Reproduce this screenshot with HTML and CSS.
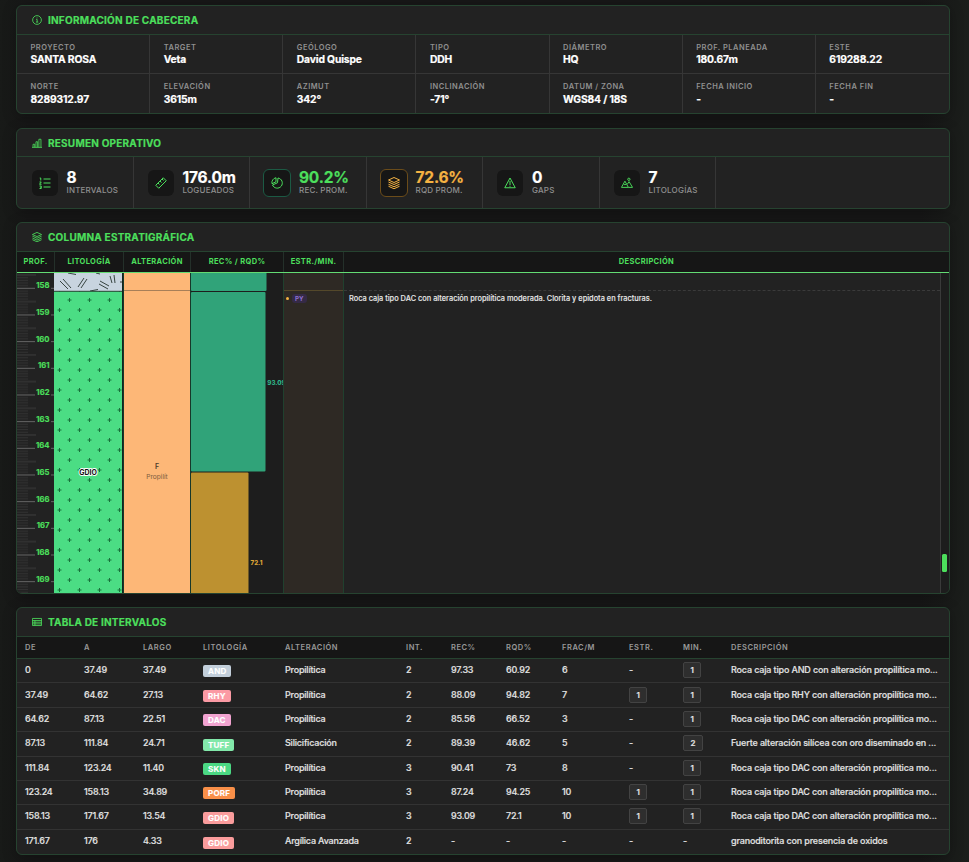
FILE: index.html
```
<!DOCTYPE html>
<html lang="es">
<head>
    <meta charset="UTF-8">
    <meta name="viewport" content="width=device-width, initial-scale=1.0">
    <title>Logueo geológico</title>
    <link rel="stylesheet" href="styles.css">
</head>
<body>
    <!-- Cabecera -->
    <section class="card card-info">
        <h2 class="card-title">
            <svg class="icon" viewBox="0 0 24 24"><circle cx="12" cy="12" r="10.5"/><path d="M10 10.5h2.3V17M9.5 17h5.5M12 6v2"/></svg>
            Información de cabecera
        </h2>
        <div class="info-grid">
            <div class="info"><span>Proyecto</span><b>SANTA ROSA</b></div>
            <div class="info"><span>Target</span><b>Veta</b></div>
            <div class="info"><span>Geólogo</span><b>David Quispe</b></div>
            <div class="info"><span>Tipo</span><b>DDH</b></div>
            <div class="info"><span>Diámetro</span><b>HQ</b></div>
            <div class="info"><span>Prof. planeada</span><b>180.67m</b></div>
            <div class="info"><span>Este</span><b>619288.22</b></div>
            <div class="info"><span>Norte</span><b>8289312.97</b></div>
            <div class="info"><span>Elevación</span><b>3615m</b></div>
            <div class="info"><span>Azimut</span><b>342°</b></div>
            <div class="info"><span>Inclinación</span><b>-71°</b></div>
            <div class="info"><span>Datum / Zona</span><b>WGS84 / 18S</b></div>
            <div class="info"><span>Fecha inicio</span><b>-</b></div>
            <div class="info"><span>Fecha fin</span><b>-</b></div>
        </div>
    </section>

    <!-- Resumen -->
    <section class="card card-stats">
        <h2 class="card-title">
            <svg class="icon" viewBox="0 0 24 24"><path d="M0 22.5h24M2.5 22v-7h4v7M9.5 22V9h4v13M16.5 22V3h5v19"/></svg>
            Resumen operativo
        </h2>
        <div class="stats">
            <div class="stat">
                <div class="stat-icon"><svg viewBox="0 0 24 24"><path d="M9 4h14M9 12h14M9 20h14M1.5 2h2v5M1 10h3.5L1 14.5h4M1 18h3.5v5H1M2.5 20.5h2"/></svg></div>
                <div class="stat-text"><b>8</b><span>Intervalos</span></div>
            </div>
            <div class="stat">
                <div class="stat-icon"><svg viewBox="0 0 24 24"><path d="M1.500 16.500 16.500 1.500l6 6-15 15zM6 12l3 3M10 8l3 3M14 4l3 3"/></svg></div>
                <div class="stat-text"><b>176.0m</b><span>Logueados</span></div>
            </div>
            <div class="stat">
                <div class="stat-icon rec"><svg viewBox="0 0 24 24"><path d="M14 2a10.2 10.2 0 1 1-11 14l10-4.500zM10 1.500v8L2 13.500A10 10 0 0 1 10 1.500z"/></svg></div>
                <div class="stat-text green"><b>90.2%</b><span>Rec. prom.</span></div>
            </div>
            <div class="stat">
                <div class="stat-icon rqd"><svg viewBox="0 0 24 24"><path d="m12 1 11 5-11 5L1 6zM1 10l11 5 11-5M1 14.500l11 5 11-5M1 18.500l11 5 11-5"/></svg></div>
                <div class="stat-text amber"><b>72.6%</b><span>RQD prom.</span></div>
            </div>
            <div class="stat">
                <div class="stat-icon"><svg viewBox="0 0 24 24"><path d="M12 2 1.500 21.500h21zM12 8v8M12 17.500v2"/></svg></div>
                <div class="stat-text"><b>0</b><span>Gaps</span></div>
            </div>
            <div class="stat">
                <div class="stat-icon"><svg viewBox="0 0 26 24"><path d="M1 21.500 8.500 8l7.500 13.500zM5.500 14l3 2 3-2M13.500 15l4-6L25 21.500h-9"/><circle cx="17" cy="4" r="2.500"/></svg></div>
                <div class="stat-text"><b>7</b><span>Litologías</span></div>
            </div>
        </div>
    </section>

    <!-- Columna estratigráfica -->
    <section class="card card-log">
        <h2 class="card-title">
            <svg class="icon" viewBox="0 0 24 24"><path d="m12 1 11 5-11 5L1 6zM1 10l11 5 11-5M1 14.500l11 5 11-5M1 18.500l11 5 11-5"/></svg>
            Columna estratigráfica
        </h2>
        <div class="log-head">
            <div>Prof.</div>
            <div>Litología</div>
            <div>Alteración</div>
            <div>Rec% / RQD%</div>
            <div>Estr./Min.</div>
            <div>Descripción</div>
        </div>
        <div class="log-body">
            <div class="col-prof">
                <svg width="37" height="320">
                    <defs>
                        <pattern id="ticks" y="14.8" width="37" height="26.67" patternUnits="userSpaceOnUse">
                            <path class="tick-minor" d="M0 3.2h11M0 5.8h11M0 8.5h11M0 11.2h11M0 16.5h11M0 19.2h11M0 21.8h11M0 24.5h11"/>
                            <path class="tick-mid" d="M0 13.8h19"/>
                            <path class="tick-major" d="M0 .5h18M34 .5h3"/>
                        </pattern>
                    </defs>
                    <rect width="37" height="320" fill="url(#ticks)"/>
                    <g class="depth">
                        <text x="32.5" y="15.3">158</text>
                        <text x="32.5" y="42">159</text>
                        <text x="32.5" y="68.6">160</text>
                        <text x="32.5" y="95.3">161</text>
                        <text x="32.5" y="122">162</text>
                        <text x="32.5" y="148.6">163</text>
                        <text x="32.5" y="175.3">164</text>
                        <text x="32.5" y="202">165</text>
                        <text x="32.5" y="228.6">166</text>
                        <text x="32.5" y="255.3">167</text>
                        <text x="32.5" y="282">168</text>
                        <text x="32.5" y="308.6">169</text>
                    </g>
                </svg>
            </div>
            <div class="col-lito">
                <svg width="68" height="320">
                    <defs>
                        <pattern id="gdio" x="0" y="22" width="20" height="20" patternUnits="userSpaceOnUse">
                            <path class="plus" d="M15.500 3v4M13.500 5h4M5.500 13v4M3.500 15h4"/>
                        </pattern>
                    </defs>
                    <rect class="porf" width="68" height="18"/>
                    <path class="dashes" d="m6 8 8 8M9 6l8 9M24 14l6-9M27 15l6-9M46 8l9 5M45 11l9 5M56 3l2 7M60 2l1 8M14 0l8 1.500M42 0l4 1M36 18l8-1.500M67 8v2"/>
                    <rect class="gdio" y="18" width="68" height="302"/>
                    <rect y="18.5" width="68" height="302" fill="url(#gdio)"/>
                    <path class="contact" d="M0 18.3h68"/>
                    <text class="lito-label" x="34" y="202">GDIO</text>
                </svg>
            </div>
            <div class="col-alt">
                <svg width="66" height="320">
                    <rect class="prop" width="66" height="320"/>
                    <path class="contact-soft" d="M0 17.500h66"/>
                    <text class="alt-code" x="33" y="196">F</text>
                    <text class="alt-name" x="33" y="206">Propilít</text>
                </svg>
            </div>
            <div class="col-rec">
                <svg width="92" height="320">
                    <rect class="bar-rec" x="0" y="-5" width="75.500" height="23" rx="1"/>
                    <rect class="bar-rec" x="0" y="19" width="74.500" height="179.500" rx="1"/>
                    <rect class="bar-rqd" x="0" y="199.500" width="57.500" height="125" rx="1"/>
                    <text class="rec-value" x="76.300" y="112">93.09</text>
                    <text class="rqd-value" x="59.500" y="292">72.1</text>
                </svg>
            </div>
            <div class="col-estr">
                <div class="mineral"><i></i><span>PY</span></div>
            </div>
            <div class="col-desc">
                <p>Roca caja tipo DAC con alteración propilítica moderada. Clorita y epidota en fracturas.</p>
            </div>
            <div class="scrollbar"><div class="thumb"></div></div>
        </div>
    </section>

    <!-- Tabla -->
    <section class="card card-table">
        <h2 class="card-title">
            <svg class="icon" viewBox="0 0 24 24"><path d="M1 3.500h22v17H1zM1 8.500h22M1 12.500h22M1 16.500h22M7 8.500v12"/></svg>
            Tabla de intervalos
        </h2>
        <table>
            <colgroup>
                <col class="w-de"><col class="w-a"><col class="w-largo"><col class="w-lito"><col class="w-alt"><col class="w-int"><col class="w-rec"><col class="w-rqd"><col class="w-frac"><col class="w-estr"><col class="w-min"><col>
            </colgroup>
            <thead>
                <tr><th>De</th><th>A</th><th>Largo</th><th>Litología</th><th>Alteración</th><th>Int.</th><th>Rec%</th><th>RQD%</th><th>Frac/m</th><th>Estr.</th><th>Min.</th><th>Descripción</th></tr>
            </thead>
            <tbody>
                <tr><td>0</td><td>37.49</td><td>37.49</td><td><span class="lito and">AND</span></td><td>Propilítica</td><td>2</td><td>97.33</td><td>60.92</td><td>6</td><td>-</td><td><span class="count">1</span></td><td>Roca caja tipo AND con alteración propilítica mo...</td></tr>
                <tr><td>37.49</td><td>64.62</td><td>27.13</td><td><span class="lito rhy">RHY</span></td><td>Propilítica</td><td>2</td><td>88.09</td><td>94.82</td><td>7</td><td><span class="count">1</span></td><td><span class="count">1</span></td><td>Roca caja tipo RHY con alteración propilítica mo...</td></tr>
                <tr><td>64.62</td><td>87.13</td><td>22.51</td><td><span class="lito dac">DAC</span></td><td>Propilítica</td><td>2</td><td>85.56</td><td>66.52</td><td>3</td><td>-</td><td><span class="count">1</span></td><td>Roca caja tipo DAC con alteración propilítica mo...</td></tr>
                <tr><td>87.13</td><td>111.84</td><td>24.71</td><td><span class="lito tuff">TUFF</span></td><td>Silicificación</td><td>2</td><td>89.39</td><td>46.62</td><td>5</td><td>-</td><td><span class="count">2</span></td><td>Fuerte alteración silícea con oro diseminado en ...</td></tr>
                <tr><td>111.84</td><td>123.24</td><td>11.40</td><td><span class="lito skn">SKN</span></td><td>Propilítica</td><td>3</td><td>90.41</td><td>73</td><td>8</td><td>-</td><td><span class="count">1</span></td><td>Roca caja tipo DAC con alteración propilítica mo...</td></tr>
                <tr><td>123.24</td><td>158.13</td><td>34.89</td><td><span class="lito porfido">PORF</span></td><td>Propilítica</td><td>3</td><td>87.24</td><td>94.25</td><td>10</td><td><span class="count">1</span></td><td><span class="count">1</span></td><td>Roca caja tipo DAC con alteración propilítica mo...</td></tr>
                <tr><td>158.13</td><td>171.67</td><td>13.54</td><td><span class="lito granod">GDIO</span></td><td>Propilítica</td><td>3</td><td>93.09</td><td>72.1</td><td>10</td><td><span class="count">1</span></td><td><span class="count">1</span></td><td>Roca caja tipo DAC con alteración propilítica mo...</td></tr>
                <tr><td>171.67</td><td>176</td><td>4.33</td><td><span class="lito granod">GDIO</span></td><td>Argílica Avanzada</td><td>2</td><td>-</td><td>-</td><td>-</td><td>-</td><td>-</td><td>granoditorita con presencia de oxidos</td></tr>
            </tbody>
        </table>
    </section>
</body>
</html>
```
FILE: styles.css
```
:root {
    --green: #4cdf5c;
    --amber: #f5b342;
    --border: #264330;
    --line: #363636;
    --panel: #222222;
    --dark: #161616;
    --muted: #909090;
}
* {
    box-sizing: border-box;
}
body {
    margin: 0;
    padding: 5px 19px 0 16px;
    height: 862px;
    overflow: hidden;
    font-family: Inter, "Liberation Sans", sans-serif;
    color: #fff;
    background: linear-gradient(90deg, #181a18, #171717 3%, #171717 95%, #1b1e1b);
}
.card {
    border: 1px solid var(--border);
    border-radius: 6px;
    background: var(--panel);
    box-shadow: 0 3px 14px rgba(0, 0, 0, 0.25);
    overflow: hidden;
    display: flex;
    flex-direction: column;
}
.card-info {
    height: 109px;
    margin-bottom: 14px;
}
.card-stats {
    height: 81px;
    margin-bottom: 13px;
}
.card-log {
    height: 372px;
    margin-bottom: 13px;
}
.card-table {
    height: 248px;
}
.card-title {
    display: flex;
    align-items: center;
    gap: 6px;
    flex: none;
    height: 29px;
    margin: 0;
    padding-left: 15px;
    border-bottom: 1px solid var(--border);
    font-size: 10px;
    font-weight: 700;
    letter-spacing: 0.22px;
    text-transform: uppercase;
    color: var(--green);
    -webkit-text-stroke: 0.2px;
}
.icon {
    width: 10px;
    height: 10px;
}
.icon, .stat-icon svg {
    fill: none;
    stroke: currentColor;
    stroke-width: 2;
    stroke-linejoin: round;
}

/* Datos de cabecera */
.info-grid {
    flex: 1;
    display: grid;
    grid-template-columns: repeat(7, 1fr);
    grid-template-rows: 39px 39px;
}
.info {
    padding: 8px 0 0 13.5px;
    border-right: 1px solid var(--line);
    border-bottom: 1px solid var(--line);
    white-space: nowrap;
}
.info:nth-child(7n) {
    border-right: none;
}
.info:nth-child(n + 8) {
    border-bottom: none;
}
.info span, .info b {
    display: block;
}
.info span {
    font-size: 7.5px;
    line-height: 10px;
    font-weight: 600;
    letter-spacing: 0.5px;
    text-transform: uppercase;
    color: var(--muted);
}
.info b {
    font-size: 10.3px;
    line-height: 13px;
    font-weight: 700;
    letter-spacing: -0.14px;
    -webkit-text-stroke: 0.2px;
}
.info:nth-child(n + 8) b {
    line-height: 14px;
}

/* Resumen */
.card-stats .card-title {
    height: 28px;
}
.stats {
    flex: 1;
    display: grid;
    grid-template-columns: repeat(8, 1fr);
}
.stat {
    display: flex;
    align-items: center;
    gap: 9px;
    padding-left: 14.5px;
    border-right: 1px solid var(--line);
    white-space: nowrap;
}
.stat:nth-child(n + 2) {
    padding-left: 14px;
}
.stat-icon {
    display: flex;
    align-items: center;
    justify-content: center;
    width: 26px;
    height: 26px;
    border-radius: 6px;
    background: var(--dark);
    color: var(--green);
}
.stat-icon svg {
    width: 12px;
    height: 12px;
}
.stat-icon.rec {
    width: 28px;
    height: 28px;
    margin: 0 -1px;
    border: 1px solid #1c5a44;
}
.stat-icon.rqd {
    width: 28px;
    height: 28px;
    margin: 0 -1px;
    border: 1px solid #6b4c1a;
    color: var(--amber);
}
.stat-text b, .stat-text span {
    display: block;
}
.stat-text b {
    font-size: 15.5px;
    line-height: 15px;
    font-weight: 700;
    letter-spacing: -0.2px;
    -webkit-text-stroke: 0.2px;
}
.stat-text span {
    font-size: 8px;
    line-height: 10px;
    font-weight: 500;
    letter-spacing: 0.2px;
    text-transform: uppercase;
    color: var(--muted);
}
.stat-text.green b {
    color: var(--green);
}
.stat-text.amber b {
    color: var(--amber);
}

/* Columna estratigráfica */
.log-head, .log-body {
    display: grid;
    grid-template-columns: 37px 69px 67px 93px 60px 1fr;
}
.log-head {
    height: 22px;
    background: var(--dark);
    border-bottom: 1px solid #63dc73;
    font-size: 7.5px;
    line-height: 20px;
    font-weight: 700;
    letter-spacing: 0.35px;
    text-align: center;
    text-transform: uppercase;
    color: var(--green);
}
.log-head div + div {
    border-left: 1px solid #24302a;
}
.log-body {
    flex: 1;
    grid-template-columns: 37px 70px 67px 93px 60px 1fr 8px;
    background: #1d1d1d;
}
.log-body svg {
    display: block;
}
.col-prof {
    background: var(--panel);
}
.tick-minor {
    stroke: #323232;
}
.tick-mid {
    stroke: #3c3c3c;
}
.tick-major {
    stroke: #666;
}
.depth text {
    font-size: 7.7px;
    font-weight: 700;
    text-anchor: end;
    fill: var(--green);
    stroke: var(--green);
    stroke-width: 0.2px;
}
.col-lito, .col-alt {
    border-right: 1px solid #17382a;
    background: #13251c;
}
.porf {
    fill: #c8d4df;
}
.gdio {
    fill: #4bdd84;
}
.plus {
    fill: none;
    stroke: #17703a;
    stroke-width: 1;
}
.dashes, .contact {
    fill: none;
    stroke: #26332e;
    stroke-width: 0.9;
}
.contact-soft {
    stroke: #a87f58;
}
.lito-label {
    font-size: 7px;
    font-weight: 700;
    text-anchor: middle;
    fill: #111;
    stroke: #fff;
    stroke-width: 1.8px;
    paint-order: stroke;
}
.prop {
    fill: #fdb777;
}
.alt-code, .alt-name {
    font-size: 7px;
    font-weight: 600;
    text-anchor: middle;
    fill: #4d3b2b;
}
.alt-name {
    font-size: 6.6px;
    font-weight: 400;
    fill: #7c5d40;
}
.bar-rec {
    fill: #30a379;
}
.bar-rqd {
    fill: #bd9130;
}
.rec-value, .rqd-value {
    font-size: 6.2px;
    font-weight: 800;
    fill: #2fb58a;
}
.rqd-value {
    fill: #dda536;
}
.col-rec, .col-estr {
    border-right: 1px solid #20402e;
}
.col-estr {
    padding-top: 17px;
    background: #2e2924;
}
.mineral {
    display: flex;
    align-items: center;
    gap: 3px;
    height: 16px;
    padding-left: 2px;
    border-top: 1px solid #54482a;
}
.mineral i {
    width: 3px;
    height: 3px;
    border-radius: 50%;
    background: var(--amber);
}
.mineral span {
    padding: 0 3px;
    border-radius: 3px;
    background: #352a46;
    color: #8d70d0;
    font-size: 6.2px;
    line-height: 9px;
    font-weight: 700;
}
.col-desc {
    padding-top: 17px;
    border-right: 1px solid #3a3a3a;
    background: var(--panel);
}
.col-desc p {
    margin: 0;
    padding: 3px 5px;
    border-top: 1px dashed #3a3a3a;
    font-size: 7.4px;
    line-height: 10px;
    font-weight: 500;
    color: #e8e8e8;
    -webkit-text-stroke: 0.1px;
}
.scrollbar {
    padding: 281px 2px 0 1px;
}
.thumb {
    height: 18px;
    border-radius: 1.5px;
    background: var(--green);
}

/* Tabla de intervalos */
table {
    width: 100%;
    table-layout: fixed;
    border-collapse: separate;
    border-spacing: 0;
}
.w-de, .w-a {
    width: 59px;
}
.w-largo {
    width: 60px;
}
.w-lito {
    width: 82px;
}
.w-alt {
    width: 121px;
}
.w-int {
    width: 45px;
}
.w-rec {
    width: 55px;
}
.w-rqd {
    width: 56px;
}
.w-frac {
    width: 67px;
}
.w-estr {
    width: 54px;
}
.w-min {
    width: 48px;
}
th {
    height: 22px;
    padding: 0 8px;
    background: var(--dark);
    border-bottom: 1px solid var(--border);
    font-size: 7.5px;
    font-weight: 600;
    letter-spacing: 0.55px;
    text-align: left;
    text-transform: uppercase;
    color: #999;
}
td {
    height: 24.375px;
    padding: 0 8px 1px;
    border-bottom: 1px solid #333;
    font-size: 9px;
    line-height: 12px;
    font-weight: 500;
    letter-spacing: -0.2px;
    color: #e4e4e4;
    white-space: nowrap;
    -webkit-text-stroke: 0.15px;
}
tbody tr:last-child td {
    border-bottom: none;
}
td:last-child {
    letter-spacing: -0.16px;
}
.lito {
    display: inline-block;
    height: 12px;
    padding: 0 5px;
    border-radius: 2px;
    font-size: 8px;
    line-height: 12.5px;
    font-weight: 700;
    letter-spacing: 0.2px;
    color: #fff;
    vertical-align: middle;
    position: relative;
    top: 1px;
}
.and { background: #c3cfdb; }
.rhy { background: #fb9aa4; }
.dac { background: #f2a3d0; }
.tuff { background: #82e8aa; }
.skn { background: #4bd883; }
.porfido { background: #f98f48; }
.granod { background: #fa9c9c; }
.count {
    display: inline-block;
    height: 16px;
    padding: 0 6.5px;
    border: 1px solid #434343;
    border-radius: 2px;
    background: #2e2e2e;
    font-size: 8px;
    line-height: 14px;
    font-weight: 600;
    letter-spacing: 0;
    vertical-align: middle;
}
```
